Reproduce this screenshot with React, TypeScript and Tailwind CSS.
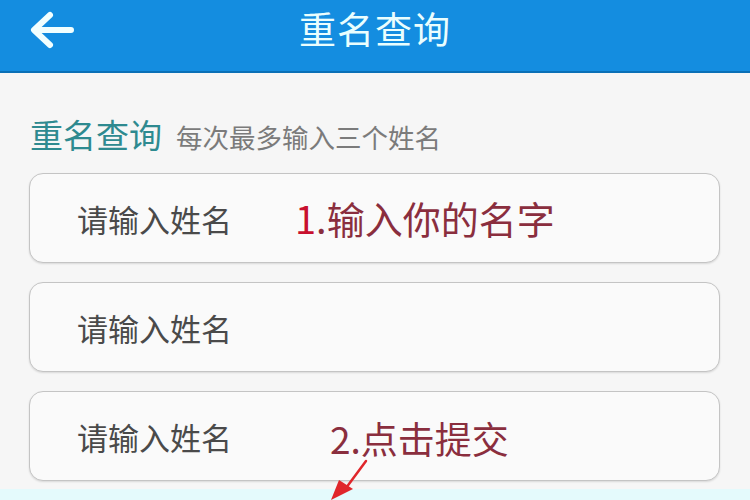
const font = { fontFamily: '"Noto Sans CJK SC", "Noto Sans", sans-serif' };

const NameInput = ({ note }: { note?: React.ReactNode }) => (
  <div className="relative flex h-[90px] items-center rounded-[14px] border-[1.5px] border-[#c4c4c4] bg-[#fafafa] pl-[47px] shadow-[0_1px_2px_rgba(0,0,0,0.12)]">
    <span className="text-[31px] leading-none text-[#4a4a4a]">请输入姓名</span>
    {note}
  </div>
);

export default function App() {
  return (
    <div className="relative h-[500px] w-[750px] overflow-hidden bg-[#f6f6f6]" style={font}>
      {/* Header */}
      <header className="relative flex h-[73px] items-start justify-center border-b-[2px] border-[#0b70b6] bg-[#148de0] pt-[4px]">
        <svg className="absolute left-[28px] top-[10px]" width="46" height="40" viewBox="0 0 46 40" fill="none">
          <path d="M22 5 L6 20 L22 35 M7 20 H43" stroke="#f2ffff" strokeWidth="6" strokeLinecap="round" strokeLinejoin="round" />
        </svg>
        <h1 className="text-[37px] leading-[48px] tracking-[1px] text-[#eafefe]">重名查询</h1>
      </header>

      {/* Content */}
      <main className="px-[29px] pt-[40px]">
        <div className="flex items-baseline gap-[14px] pl-[1px]">
          <h2 className="text-[33px] leading-[42px] text-[#2e8a90]">重名查询</h2>
          <span className="text-[26.5px] leading-none text-[#7b7b7b]">每次最多输入三个姓名</span>
        </div>

        <div className="mt-[18px] mr-[1px] flex flex-col gap-[19px]">
          <NameInput
            note={
              <span className="absolute left-[265px] top-[25px] text-[38px] leading-none text-[#8a2e3e]">
                <span className="text-[#c8102e]">1</span>.输入你的名字
              </span>
            }
          />
          <NameInput />
          <NameInput
            note={
              <span className="absolute left-[300px] top-[28px] text-[37px] leading-none text-[#8a2e3e]">
                2.点击提交
              </span>
            }
          />
        </div>
      </main>

      {/* Bottom strip of next element */}
      <div className="absolute bottom-0 left-0 right-0 h-[11px] bg-[#e4fafc]" />

      {/* Red arrow */}
      <svg className="absolute left-[326px] top-[458px]" width="45" height="42" viewBox="0 0 45 42" fill="none">
        <path d="M40 3 L20 30" stroke="#e0262b" strokeWidth="2.5" strokeLinecap="round" />
        <path d="M5 42 L13 22 L27 31 Z" fill="#e0262b" />
      </svg>
    </div>
  );
}
